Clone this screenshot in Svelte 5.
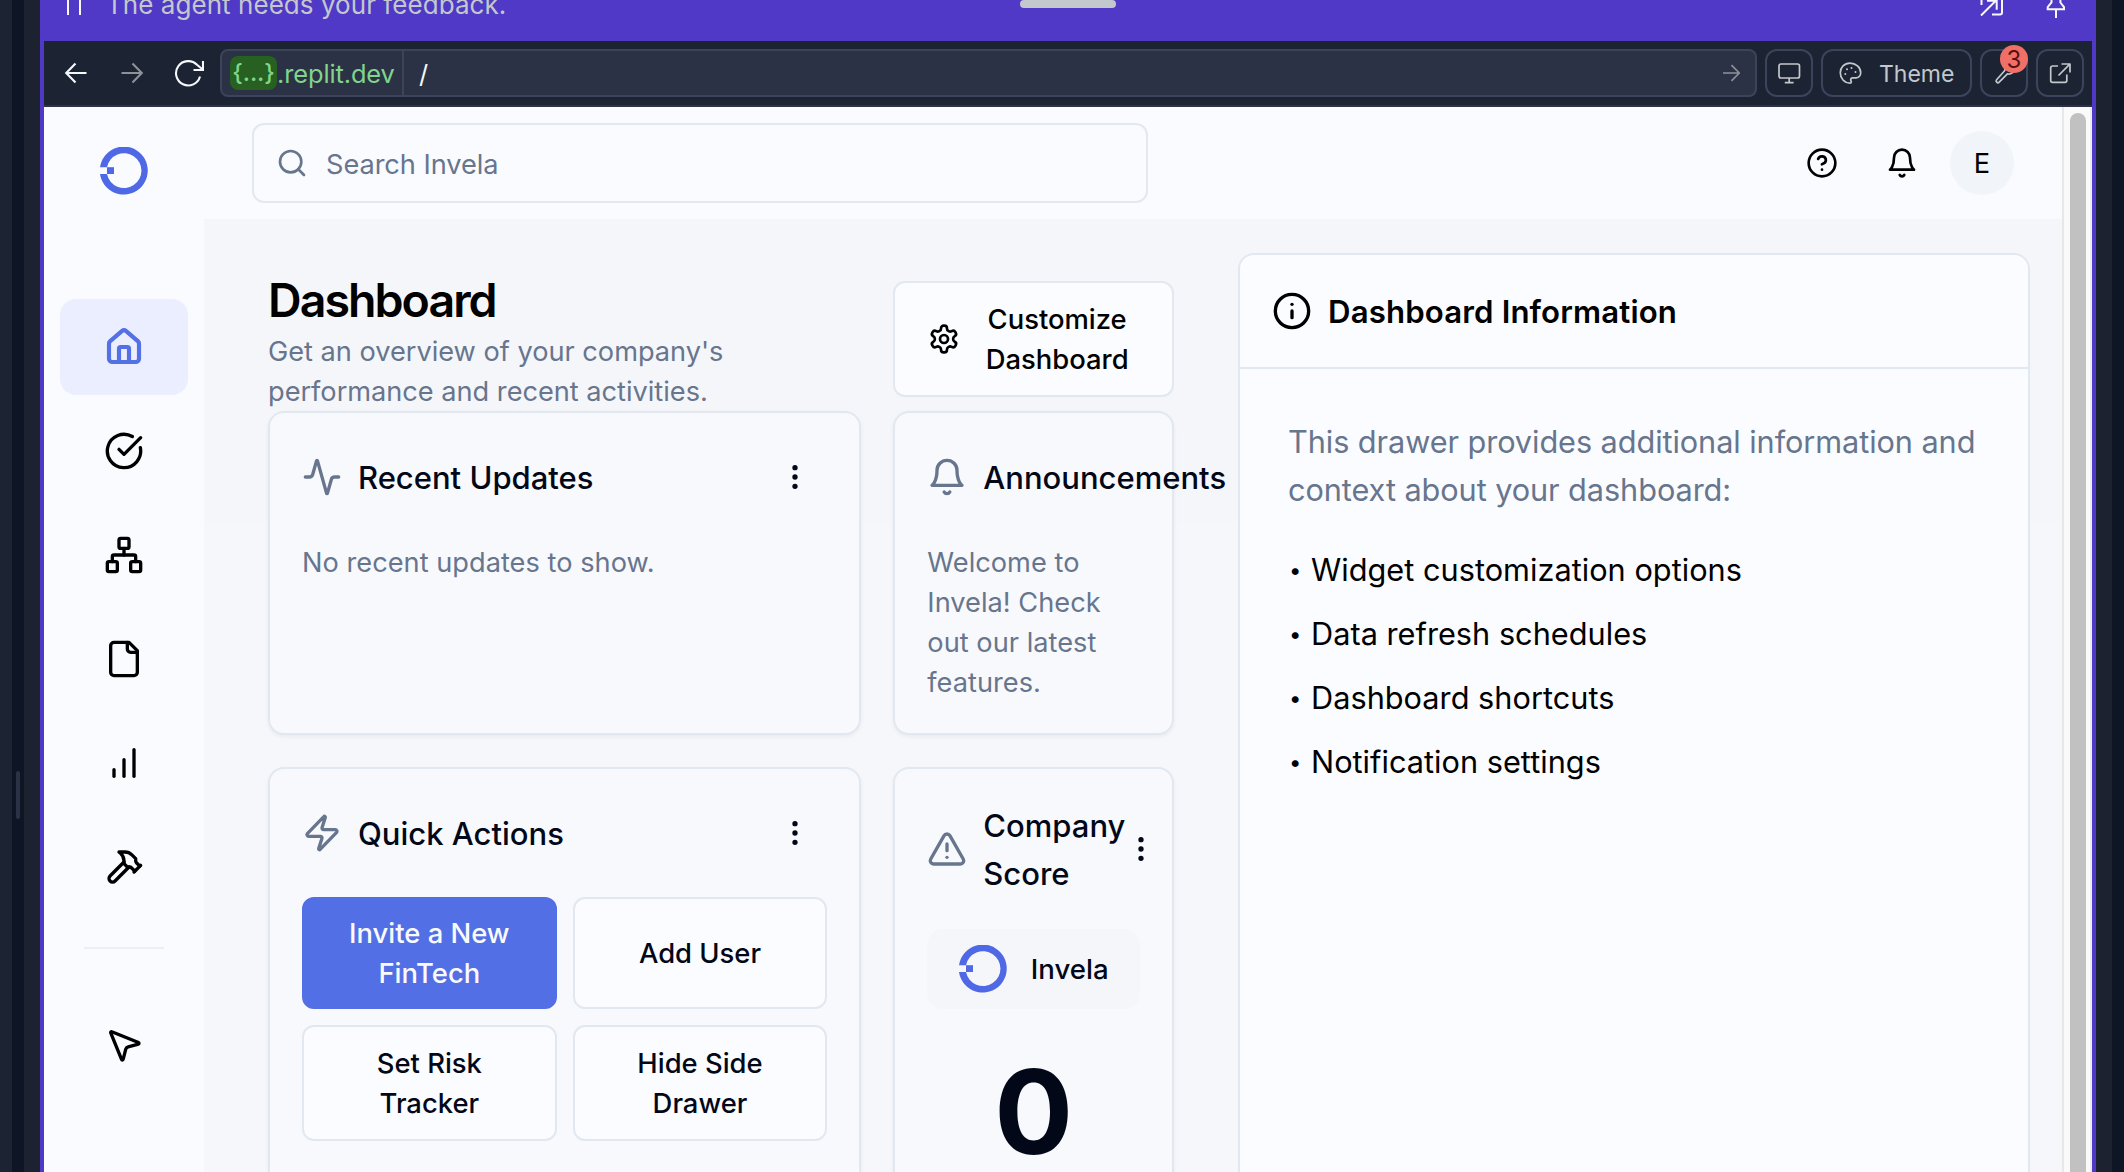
<script>
  const nav = [
    { name: 'Dashboard', active: true, d: ['M15 21v-8a1 1 0 0 0-1-1h-4a1 1 0 0 0-1 1v8', 'M3 10a2 2 0 0 1 .709-1.528l7-5.999a2 2 0 0 1 2.582 0l7 5.999A2 2 0 0 1 21 10v9a2 2 0 0 1-2 2H5a2 2 0 0 1-2-2z'] },
    { name: 'Tasks', d: ['M21.801 10A10 10 0 1 1 17 3.335', 'm9 11 3 3L22 4'] },
    { name: 'Network', d: ['M17 16h4a1 1 0 0 1 1 1v4a1 1 0 0 1-1 1h-4a1 1 0 0 1-1-1v-4a1 1 0 0 1 1-1z', 'M3 16h4a1 1 0 0 1 1 1v4a1 1 0 0 1-1 1H3a1 1 0 0 1-1-1v-4a1 1 0 0 1 1-1z', 'M10 2h4a1 1 0 0 1 1 1v4a1 1 0 0 1-1 1h-4a1 1 0 0 1-1-1V3a1 1 0 0 1 1-1z', 'M5 16v-3a1 1 0 0 1 1-1h12a1 1 0 0 1 1 1v3', 'M12 12V8'] },
    { name: 'Files', d: ['M15 2H6a2 2 0 0 0-2 2v16a2 2 0 0 0 2 2h12a2 2 0 0 0 2-2V7Z', 'M14 2v4a2 2 0 0 0 2 2h4'] },
    { name: 'Insights', d: ['M12 20V10', 'M18 20V4', 'M6 20v-4'] },
    { name: 'Builder', d: ['m15 12-8.373 8.373a1 1 0 1 1-3-3L12 9', 'm18 15 4-4', 'm21.5 11.5-1.914-1.914A2 2 0 0 1 19 8.172V7l-2.26-2.26a6 6 0 0 0-4.202-1.756L9 2.96l.92.82A6.18 6.18 0 0 1 12 8.4V10l2 2h1.172a2 2 0 0 1 1.414.586L18.5 14.5'] }
  ];
  const playground = { name: 'Playground', d: ['M4.037 4.688a.495.495 0 0 1 .651-.651l16 6.5a.5.5 0 0 1-.063.947l-6.124 1.58a2 2 0 0 0-1.438 1.435l-1.579 6.126a.5.5 0 0 1-.947.063z'] };

  const activity = ['M22 12h-2.48a2 2 0 0 0-1.93 1.46l-2.35 8.36a.25.25 0 0 1-.48 0L9.24 2.18a.25.25 0 0 0-.48 0l-2.35 8.36A2 2 0 0 1 4.49 12H2'];
  const bell = ['M6 8a6 6 0 0 1 12 0c0 7 3 9 3 9H3s3-2 3-9', 'M10.3 21a1.94 1.94 0 0 0 3.4 0'];
  const zap = ['M4 14a1 1 0 0 1-.78-1.63l9.9-10.2a.5.5 0 0 1 .86.46l-1.92 6.02A1 1 0 0 0 13 10h7a1 1 0 0 1 .78 1.63l-9.9 10.2a.5.5 0 0 1-.86-.46l1.92-6.02A1 1 0 0 0 11 14z'];
  const alert = ['m21.73 18-8-14a2 2 0 0 0-3.48 0l-8 14A2 2 0 0 0 4 21h16a2 2 0 0 0 1.73-3', 'M12 9v4', 'M12 17h.01'];
  const gear = ['M12.22 2h-.44a2 2 0 0 0-2 2v.18a2 2 0 0 1-1 1.73l-.43.25a2 2 0 0 1-2 0l-.15-.08a2 2 0 0 0-2.73.73l-.22.38a2 2 0 0 0 .73 2.73l.15.1a2 2 0 0 1 1 1.72v.51a2 2 0 0 1-1 1.74l-.15.09a2 2 0 0 0-.73 2.73l.22.38a2 2 0 0 0 2.73.73l.15-.08a2 2 0 0 1 2 0l.43.25a2 2 0 0 1 1 1.73V20a2 2 0 0 0 2 2h.44a2 2 0 0 0 2-2v-.18a2 2 0 0 1 1-1.73l.43-.25a2 2 0 0 1 2 0l.15.08a2 2 0 0 0 2.73-.73l.22-.39a2 2 0 0 0-.73-2.73l-.15-.08a2 2 0 0 1-1-1.74v-.5a2 2 0 0 1 1-1.74l.15-.09a2 2 0 0 0 .73-2.73l-.22-.38a2 2 0 0 0-2.73-.73l-.15.08a2 2 0 0 1-2 0l-.43-.25a2 2 0 0 1-1-1.73V4a2 2 0 0 0-2-2z', 'M12 9a3 3 0 1 0 0 6 3 3 0 1 0 0-6'];
  const search = ['M11 3a8 8 0 1 0 0 16 8 8 0 1 0 0-16', 'm21 21-4.3-4.3'];
  const ring = 'M12 2a10 10 0 1 0 0 20 10 10 0 1 0 0-20';
  const help = [ring, 'M9.09 9a3 3 0 0 1 5.83 1c0 2-3 3-3 3', 'M12 17h.01'];
  const info = [ring, 'M12 16v-4', 'M12 8h.01'];
  const dots = ['M12 4a1 1 0 1 0 0 2 1 1 0 1 0 0-2', 'M12 11a1 1 0 1 0 0 2 1 1 0 1 0 0-2', 'M12 18a1 1 0 1 0 0 2 1 1 0 1 0 0-2'];

  const tips = ['Widget customization options', 'Data refresh schedules', 'Dashboard shortcuts', 'Notification settings'];
</script>

{#snippet icon(paths, cls = '')}
  <svg class="icon {cls}" viewBox="0 0 24 24" aria-hidden="true">
    {#each paths as d}<path {d} />{/each}
  </svg>
{/snippet}

{#snippet logo()}
  <svg class="logo" viewBox="0 0 48 48" aria-hidden="true">
    <path d="M0 20.2A24 24 0 1 1 0 27H7A17.4 17.4 0 1 0 7 20.2Z" />
    <path d="M7 20.2h7V27H7z" />
  </svg>
{/snippet}

<div class="workspace">
  <div class="left-rail"></div>
  <div class="splitter"><span></span></div>
  <div class="gutter"></div>

  <section class="pane">
    <header class="banner">
      <svg class="pause" viewBox="0 0 16 24"><path d="M3 0v15M15 0v15" /></svg>
      <span class="banner-text">The agent needs your feedback.</span>
      <i class="grip"></i>
      <svg class="banner-icon popout" viewBox="0 0 24 20"><path d="M1.5 5V-4M1 15.5 16.5 0M7 .8h9.7v9M12 14.5h8a2 2 0 0 0 2-2V-4" /></svg>
      <svg class="banner-icon" viewBox="0 0 24 20"><path d="M7.5-3v5.5L3.7 7.2v2H20v-2l-3.6-4.7V-3M12 9.5V18" /></svg>
    </header>

    <nav class="toolbar">
      <button class="tool plain" aria-label="Back"><svg viewBox="0 0 32 32"><path d="M26.5 16H6.5M15.5 6.5 6.2 16l9.3 9.5" /></svg></button>
      <button class="tool plain dim" aria-label="Forward"><svg viewBox="0 0 32 32"><path d="M5.5 16h20M16.5 6.5l9.3 9.5-9.3 9.5" /></svg></button>
      <button class="tool plain" aria-label="Reload"><svg viewBox="0 0 32 32"><path d="M28 19.5A12.2 12.2 0 1 1 25 7.8L31 12.7M31 4v9H21.5" /></svg></button>
      <div class="address">
        <div class="host"><span class="slug">{'{...}'}</span><span>.replit.dev</span></div>
        <span class="path">/</span>
        <svg class="go" viewBox="0 0 32 32"><path d="M8 16h16M16.5 8.2l7.8 7.8-7.8 7.8" /></svg>
      </div>
      <button class="tool" aria-label="Devices"><svg viewBox="0 0 32 32"><rect x="6" y="7" width="20.500" height="14" rx="2" /><path d="M16.200 21v4.500M11.800 25.600h8.800" /></svg></button>
      <button class="tool theme">
        <svg viewBox="0 0 32 32"><path d="M16 6.200c-5.600 0-9.700 4.200-9.700 9.600 0 5.600 4 10.300 9.700 10.300.7 0 1.300-.5 1.300-1.200 0-.8-.6-1.200-.6-2 0-1.200 1-2.100 2.200-2.100h2.900c2.800 0 4.900-2.200 4.900-5 0-5.400-5-9.600-10.700-9.600z" /><path class="paint" d="M11.300 17h.01M13 12.200h.01M17.500 10.900h.01M21.500 14.900h.01" /></svg>
        <span>Theme</span>
      </button>
      <button class="tool" aria-label="Developer tools">
        <svg viewBox="0 0 32 32"><path d="M16.800 13.500c-.8-3.800 2-8 6.500-7.500l-3 3.500.6 2.900 2.800.5 3.200-3c.7 4.500-3.500 8-7.500 6.900l-8.200 8.400c-1.700 1.600-4.100-.7-2.600-2.500z" /></svg>
        <span class="badge">3</span>
      </button>
      <button class="tool" aria-label="Open in new tab"><svg viewBox="0 0 32 32"><path d="M14 9H8.500A1.800 1.800 0 0 0 6.700 10.800V23.500a1.800 1.800 0 0 0 1.800 1.800H21a1.800 1.800 0 0 0 1.800-1.800V17.500M17.500 7H26v8.500M25.800 7.200 14.500 18.500" /></svg></button>
    </nav>

    <div class="webview">
      <aside class="sidebar">
        {@render logo()}
        <div class="menu">
          {#each nav as item}
            <a class="item" class:active={item.active} href="#{item.name}" aria-label={item.name}>{@render icon(item.d, 'lg')}</a>
          {/each}
          <hr />
          <a class="item" href="#playground" aria-label="Playground">{@render icon(playground.d, 'lg')}</a>
        </div>
      </aside>

      <div class="app">
        <header class="topbar">
          <div class="search">{@render icon(search)}<span>Search Invela</span></div>
          <div class="account">
            {@render icon(help)}
            {@render icon(bell)}
            <span class="avatar">E</span>
          </div>
        </header>

        <main class="main">
          <div class="board">
            <div class="intro">
              <h1>Dashboard</h1>
              <p>Get an overview of your company's<br />performance and recent activities.</p>
            </div>
            <button class="btn customize">{@render icon(gear)}<span>Customize<br />Dashboard</span></button>

            <article class="card wide">
              <header>{@render icon(activity, 'lg')}<h2>Recent Updates</h2><span class="more">{@render icon(dots, 'solid')}</span></header>
              <p>No recent updates to show.</p>
            </article>

            <article class="card">
              <header>{@render icon(bell, 'lg')}<h2>Announcements</h2></header>
              <p>Welcome to Invela! Check out our latest features.</p>
            </article>

            <article class="card wide tall">
              <header>{@render icon(zap, 'lg')}<h2>Quick Actions</h2><span class="more">{@render icon(dots, 'solid')}</span></header>
              <div class="actions">
                <button class="btn primary">Invite a New<br />FinTech</button>
                <button class="btn">Add User</button>
                <button class="btn">Set Risk<br />Tracker</button>
                <button class="btn">Hide Side<br />Drawer</button>
              </div>
            </article>

            <article class="card tall">
              <header>{@render icon(alert, 'lg')}<h2>Company<br />Score</h2><span class="more tight">{@render icon(dots, 'solid')}</span></header>
              <div class="company">{@render logo()}<span>Invela</span></div>
              <div class="score">0</div>
            </article>
          </div>

          <aside class="drawer">
            <header>{@render icon(info, 'lg')}<h2>Dashboard Information</h2></header>
            <div class="drawer-body">
              <p>This drawer provides additional information and<br />context about your dashboard:</p>
              <ul>
                {#each tips as tip}<li><i>•</i>{tip}</li>{/each}
              </ul>
            </div>
          </aside>
        </main>
      </div>

      <div class="scroll"><span></span></div>
    </div>
  </section>

  <div class="gutter"></div>
  <div class="right-rail"></div>
</div>

<style>
  :global(body) { margin: 0; background: #0e1525; }
  * { box-sizing: border-box; }
  h1, h2, p, ul { margin: 0; padding: 0; }
  button { font: inherit; color: inherit; margin: 0; padding: 0; }

  .workspace {
    display: flex;
    height: 1172px;
    overflow: hidden;
    font-family: Inter, Roboto, sans-serif;
    color: #000;
  }
  .left-rail { width: 12px; background: #1c2333; }
  .splitter { width: 12px; background: #0e1525; display: flex; justify-content: center; padding-top: 771px; }
  .splitter span { width: 4px; height: 48px; border-radius: 2px; background: #2b3245; }
  .gutter { width: 16px; background: #1c2230; }
  .right-rail { width: 12px; background: #0e1525; }

  .pane { flex: 1; min-width: 0; display: flex; flex-direction: column; background: #4f39c6; }

  .banner { height: 41px; display: flex; align-items: flex-start; padding: 0 28px 0 25px; position: relative; color: #c2c8cc; }
  .banner svg { fill: none; stroke: #f5f9fc; stroke-width: 2; overflow: hidden; }
  .pause { width: 16px; height: 24px; flex: none; }
  .banner-text { margin-left: 25px; margin-top: -15px; font-size: 26px; line-height: 39px; letter-spacing: 0.050px; flex: 1; }
  .banner-icon { width: 24px; height: 20px; margin-left: 40px; }
  .grip { position: absolute; left: 980px; top: 0; width: 96px; height: 8px; border-radius: 4px; background: #c2c8cc; }

  .toolbar { height: 66px; margin: 0 4px; padding: 8px; display: flex; gap: 8px; background: #1c2333; border-bottom: 2px solid #2b3245; color: #c2c8cc; }
  .tool { position: relative; width: 48px; height: 48px; flex: none; display: flex; align-items: center; justify-content: center; background: none; border: 2px solid #3c445c; border-radius: 12px; }
  .tool svg, .go { width: 32px; height: 32px; flex: none; fill: none; stroke: currentColor; stroke-width: 1.700; stroke-linejoin: round; }
  .plain { border: 0; color: #f5f9fc; }
  .plain svg { stroke-width: 2.100; stroke-linejoin: miter; }
  .dim { color: #8d9198; }
  .theme { width: 151px; gap: 13px; justify-content: flex-start; padding-left: 11px; font-size: 23px; }
  .theme span { margin-top: 1px; }
  .paint { stroke-width: 2; stroke-linecap: round; }
  .badge { position: absolute; top: -6px; right: -2px; width: 28px; height: 28px; border-radius: 50%; background: #f07068; color: #5c0f0c; font-size: 24px; line-height: 29px; text-align: center; }
  .address { flex: 1; display: flex; align-items: center; background: #2b3245; border: 2px solid #3c445c; border-radius: 8px; font-size: 25.400px; }
  .host { height: 44px; width: 182px; flex: none; display: flex; align-items: center; padding-left: 8px; border-right: 2px solid #3c445c; color: #80d58b; letter-spacing: -0.100px; }
  .slug { width: 47px; height: 34px; line-height: 33px; border-radius: 8px; background: #276020; text-align: center; font-size: 24px; font-weight: 500; }
  .path { flex: 1; padding-left: 15px; color: #f5f9fc; }
  .go { margin-right: 8px; color: #8d9198; }

  .webview { flex: 1; min-height: 0; margin: 0 4px; display: flex; background: #fafbff; }
  .icon { width: 32px; height: 32px; flex: none; fill: none; stroke: currentColor; stroke-width: 2; stroke-linecap: round; stroke-linejoin: round; }
  .lg { width: 40px; height: 40px; }
  .solid { fill: currentColor; }
  .logo { width: 48px; height: 48px; flex: none; fill: #4f68e6; }

  .sidebar { width: 160px; flex: none; display: flex; flex-direction: column; align-items: center; padding-top: 40px; }
  .menu { margin-top: 104px; width: 128px; display: flex; flex-direction: column; gap: 8px; }
  .item { height: 96px; border-radius: 16px; display: flex; align-items: center; justify-content: center; color: #000; }
  .active { background: #ebeeff; color: #5370e4; }
  .active .icon { stroke-width: 2.500; }
  hr { width: 80px; height: 2px; margin: 24px auto 40px; border: 0; background: #eeeff6; }

  .app { flex: 1; min-width: 0; display: flex; flex-direction: column; }
  .topbar { height: 112px; flex: none; display: flex; align-items: center; justify-content: space-between; padding: 0 48px; }
  .search { width: 896px; height: 80px; display: flex; align-items: center; gap: 18px; padding-left: 22px; border: 2px solid #e2e8f0; border-radius: 12px; color: #67758d; font-size: 27.200px; }
  .search span { padding-top: 2px; letter-spacing: -0.060px; }
  .account { display: flex; align-items: center; gap: 48px; }
  .avatar { width: 64px; height: 64px; margin-left: -16px; border-radius: 50%; background: #f1f5f9; font-size: 27.200px; line-height: 65px; text-align: center; }

  .main { flex: 1; min-height: 0; display: flex; align-items: flex-start; gap: 64px; padding: 34px 32px 0 64px; background: linear-gradient(#f5f6fa 0 303px, #f6f7fb 303px); }
  .board { width: 906px; flex: none; padding-top: 23px; display: grid; grid-template-columns: repeat(3, minmax(0, 1fr)); column-gap: 32px; grid-template-rows: 135px 324px 520px; }
  .intro { grid-column: span 2; color: #67758d; }
  h1 { color: #000; font-size: 46.500px; line-height: 48px; font-weight: 600; letter-spacing: -1.950px; margin-bottom: 8px; }
  .intro p, .card p { font-size: 27.200px; line-height: 40px; }
  .intro p { letter-spacing: -0.020px; }
  .card p { margin-top: 2px; letter-spacing: 0.020px; }
  .card header + p { margin-top: -30px; padding-top: 32px; }
  .btn { display: flex; align-items: center; justify-content: center; text-align: center; background: #fbfcff; border: 2px solid #e2e8f0; border-radius: 12px; color: #020817; font-size: 27.400px; line-height: 40px; font-weight: 500; }
  .customize { height: 116px; margin-top: 5px; gap: 26px; padding-right: 11px; color: #000; }
  .card { background: #f8f9fd; border: 2px solid #e2e8f0; border-radius: 16px; padding: 32px; box-shadow: 0 2px 4px rgb(0 0 0 / 5%); color: #67758d; }
  .tall { margin-top: 32px; }
  .wide { grid-column: span 2; }
  .card header { min-height: 64px; margin-bottom: 32px; display: flex; align-items: center; gap: 16px; }
  .card h2 { color: #020817; font-size: 31px; line-height: 48px; font-weight: 500; white-space: nowrap; position: relative; top: 1px; }
  .more { width: 64px; margin-left: auto; flex: none; display: flex; justify-content: center; color: #020817; }
  .tight { width: 32px; margin-left: -16px; }
  .actions { display: grid; grid-template-columns: 1fr 1fr; grid-template-rows: 112px 116px; gap: 16px; }
  .primary { background: #536fe5; border-color: #536fe5; color: #f8fafc; }
  .company { height: 80px; display: flex; align-items: center; justify-content: center; gap: 24px; border-radius: 16px; background: #f5f6fa; color: #020817; font-size: 27.600px; font-weight: 500; }
  .score { margin-top: 43px; color: #020817; font-size: 117px; line-height: 120px; font-weight: 700; text-align: center; }

  .drawer { flex: 1; height: 960px; background: #fbfcff; border: 2px solid #e2e8f0; border-radius: 16px; }
  .drawer header { height: 114px; display: flex; align-items: center; gap: 16px; padding-left: 32px; border-bottom: 2px solid #e2e8f0; }
  .drawer h2 { font-size: 31.200px; line-height: 48px; font-weight: 600; letter-spacing: 0.130px; padding-top: 1px; }
  .drawer-body { padding: 49px 48px; font-size: 30.700px; line-height: 48px; }
  .drawer-body p { color: #67758d; letter-spacing: -0.080px; }
  ul { list-style: none; margin-top: 32px; display: flex; flex-direction: column; gap: 16px; }
  li { display: flex; letter-spacing: 0.020px; }
  i { font-style: normal; }
  li i { width: 23px; padding-left: 1px; font-size: 22px; }

  .scroll { width: 30px; flex: none; padding: 6px 4px 0 6px; background: #fafafa; border-left: 2px solid #e8e8e8; border-right: 2px solid #ededed; }
  .scroll span { display: block; width: 16px; height: 1100px; border-radius: 8px; background: #c1c1c1; }
</style>
